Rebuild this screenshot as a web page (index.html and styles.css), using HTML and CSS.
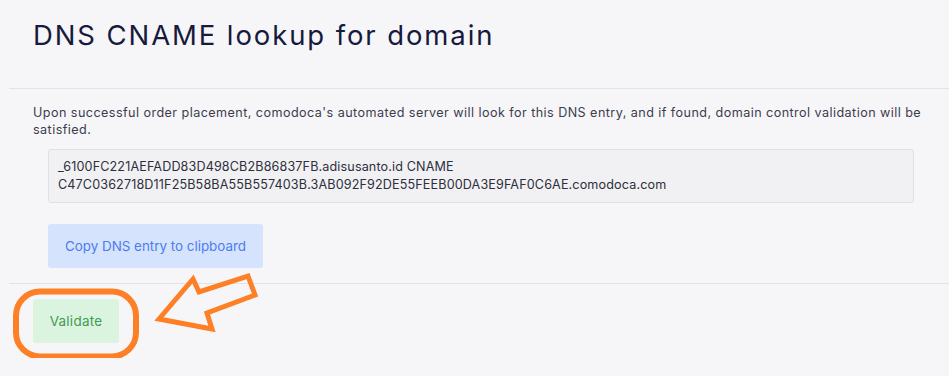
FILE: index.html
```html
<!DOCTYPE html>
<html lang="en">
<head>
    <meta charset="UTF-8">
    <title>DNS CNAME lookup</title>
    <link rel="stylesheet" href="styles.css">
</head>
<body>
    <div class="card">
        <div class="card-header">
            <h1>DNS CNAME lookup for domain</h1>
        </div>

        <div class="card-body">
            <p class="info">Upon successful order placement, comodoca's automated server will look for this DNS entry, and if found, domain control validation will be satisfied.</p>
            <div class="dns-entry">_6100FC221AEFADD83D498CB2B86837FB.adisusanto.id CNAME<br>C47C0362718D11F25B58BA55B557403B.3AB092F92DE55FEEB00DA3E9FAF0C6AE.comodoca.com</div>
            <button class="btn btn-copy">Copy DNS entry to clipboard</button>
        </div>

        <div class="card-footer">
            <button class="btn btn-validate">Validate</button>
        </div>
    </div>

    <!-- annotation drawn on top of the screenshot -->
    <svg class="annotation" width="949" height="376" viewBox="0 0 949 376">
        <rect x="16" y="291.5" width="120" height="65" rx="24" fill="none" stroke="#fd8026" stroke-width="6"/>
        <polygon points="159,319 193,279 199,292 248,276 255,295 207,313 212,329" fill="none" stroke="#fd8026" stroke-width="5" stroke-linejoin="miter"/>
    </svg>
</body>
</html>
```

FILE: styles.css
```css
* {
    margin: 0;
    padding: 0;
    box-sizing: border-box;
}

body {
    background: #f6f6f9;
    font-family: Inter, "Noto Sans", sans-serif;
    color: #3b3d4c;
    position: relative;
    overflow: hidden;
}

.card {
    margin-left: 9px;
    width: 960px;
}

.card-header {
    height: 89px;
    padding: 18px 24px 0;
    border-bottom: 1px solid #e3e3e7;
}

.card-header h1 {
    font-size: 27.5px;
    font-weight: 400;
    color: #171a3d;
    letter-spacing: 1.9px;
}

.card-body {
    padding: 15px 24px 15px;
    border-bottom: 1px solid #e3e3e7;
}

.info {
    font-size: 12.6px;
    line-height: 17px;
    width: 896px;
    letter-spacing: 0.44px;
}

.dns-entry {
    margin: 11px 0 0 15px;
    width: 866px;
    padding: 8px 9px;
    background: #f1f1f3;
    border: 1px solid #e0e0e4;
    border-radius: 3px;
    font-size: 12.6px;
    line-height: 18px;
    letter-spacing: 0.13px;
    color: #2d2f3c;
}

.btn {
    border: none;
    border-radius: 3px;
    font-family: Inter, "Noto Sans", sans-serif;
    font-size: 13.4px;
    height: 44px;
    letter-spacing: 0.3px;
    cursor: pointer;
}

.btn-copy {
    margin: 21px 0 0 15px;
    width: 215px;
    background: #d5e3fd;
    color: #4b7cf2;
    letter-spacing: 0;
}

.btn-validate {
    width: 86px;
    background: #dbf4df;
    color: #3f9a52;
}

.card-footer {
    padding: 15px 24px;
}

.annotation {
    position: absolute;
    left: 0;
    top: 0;
    pointer-events: none;
}
```
